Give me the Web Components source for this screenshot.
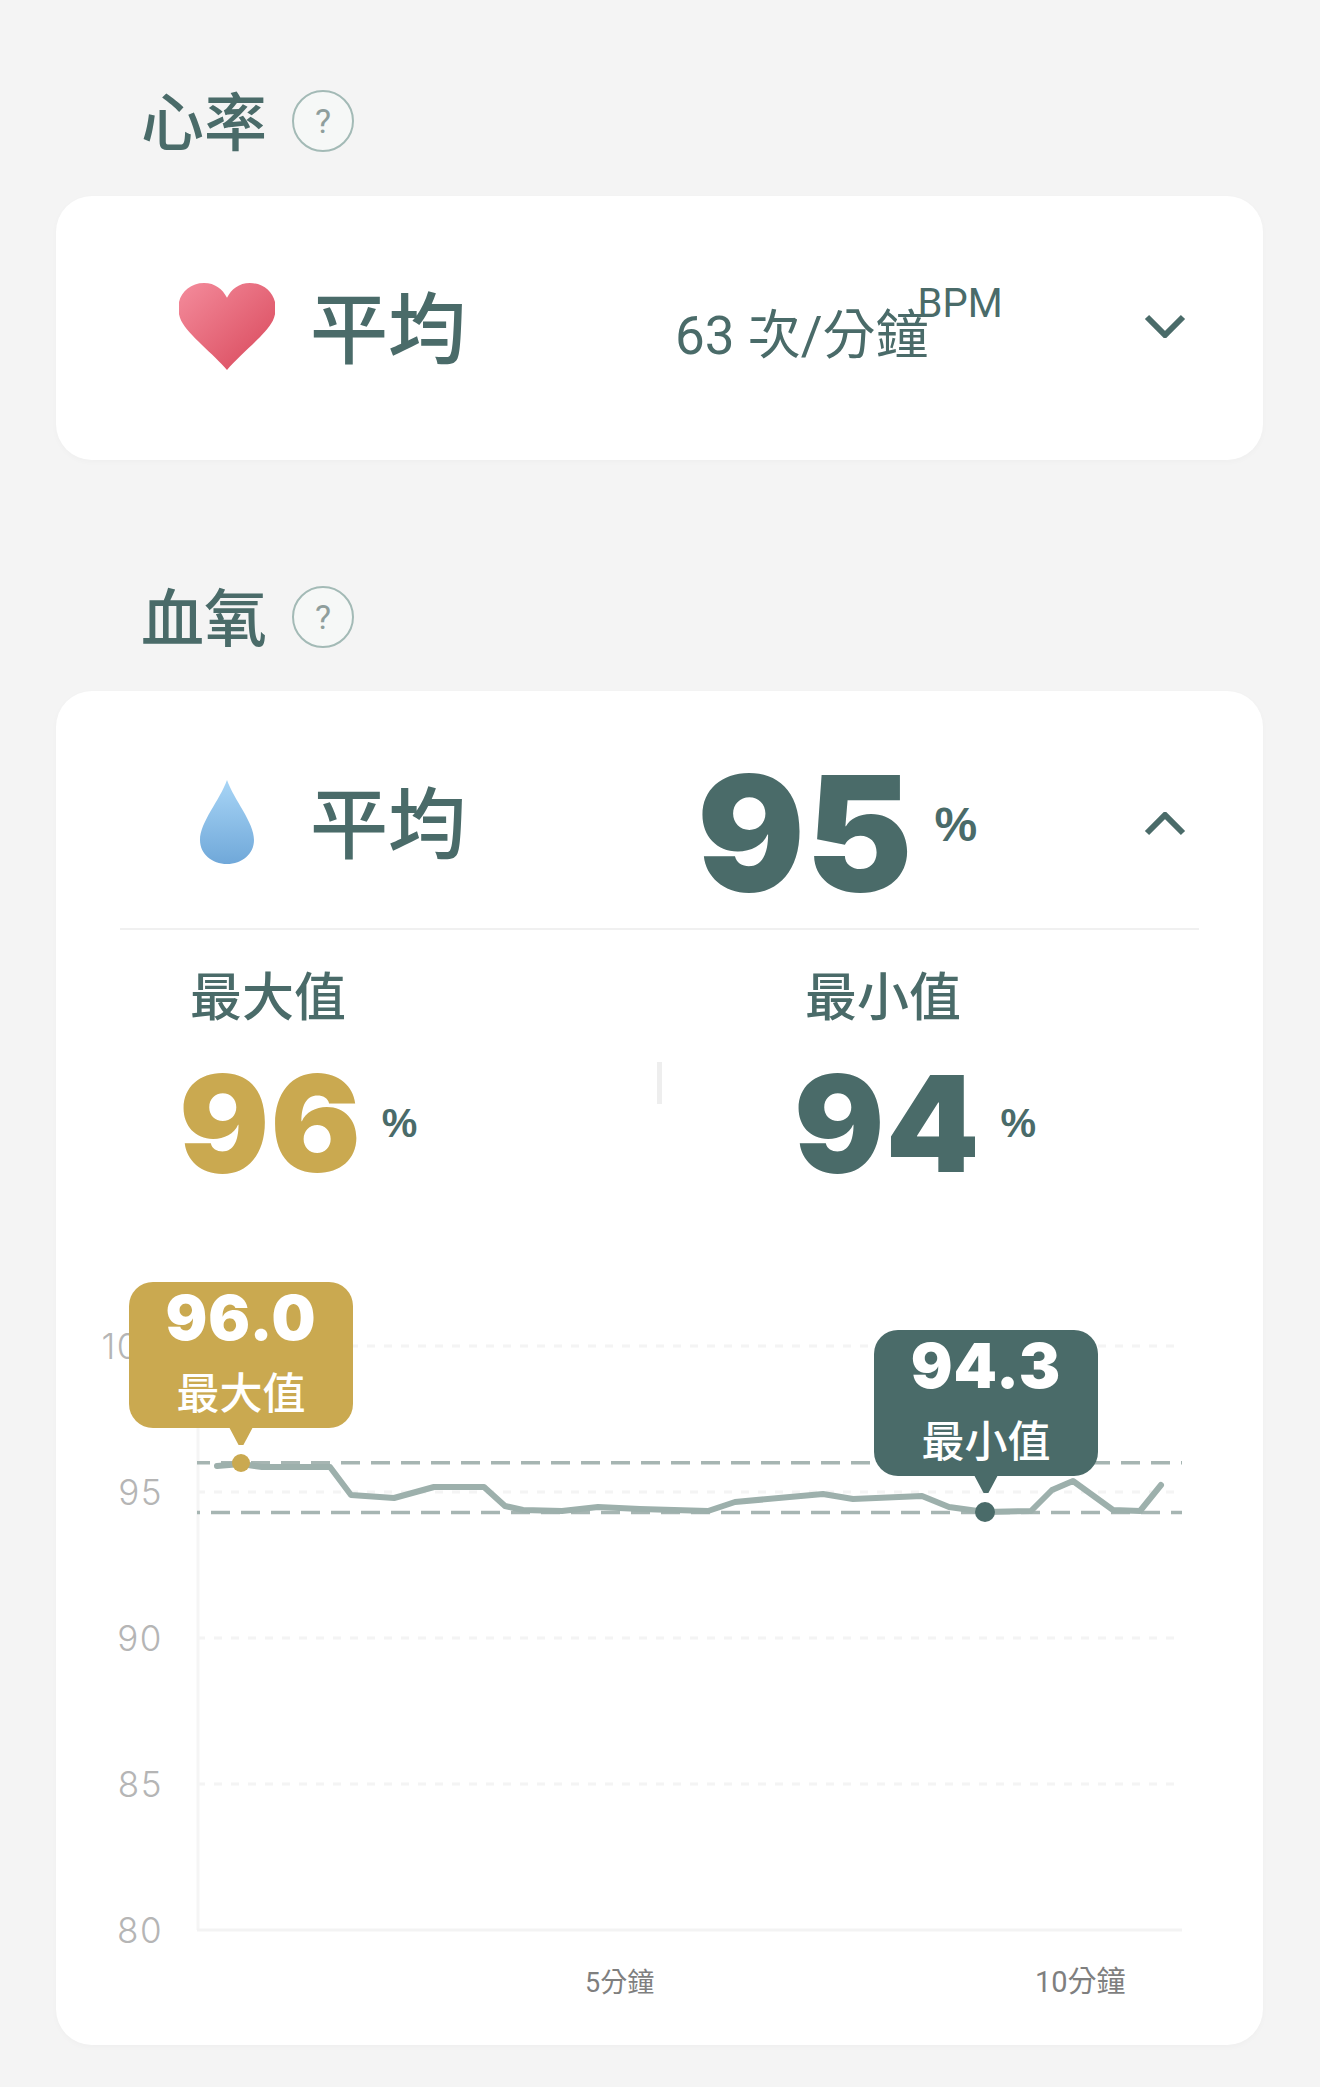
<!DOCTYPE html>
<html lang="zh-Hant">
<head>
<meta charset="utf-8">
<title>心率與血氧</title>
<style>
html,body{margin:0;padding:0;background:#f4f4f4}
body{width:1320px;height:2087px;overflow:hidden;color:#4a6b69;font-family:"Noto Sans CJK TC","Noto Sans",sans-serif}
</style>
</head>
<body>
<vital-page>
  <vital-title>心率</vital-title>
  <vital-card variant="collapsed">
    <vital-row>
      <svg slot="icon" width="96" height="87" viewBox="3 2 88 83" preserveAspectRatio="none"><defs><linearGradient id="h" x1="0" y1="0" x2="1" y2="1"><stop offset="0" stop-color="#f48c9c"/><stop offset="1" stop-color="#d8475a"/></linearGradient></defs><path fill="url(#h)" d="M47 85 C35 70 12 52 5 38 C-3 20 8 2 26 2 C36 2 43 8 47 16 C51 8 58 2 68 2 C86 2 97 20 89 38 C82 52 59 70 47 85Z"/></svg>
      <text-bpm slot="value"></text-bpm>
    </vital-row>
  </vital-card>
  <vital-title class="second">血氧</vital-title>
  <vital-card variant="open">
    <vital-row open>
      <svg slot="icon" width="54" height="84" viewBox="0 0 54 84"><defs><linearGradient id="d" x1="0" y1="0" x2="0" y2="1"><stop offset="0" stop-color="#a8d5f6"/><stop offset="1" stop-color="#70a8d9"/></linearGradient></defs><path fill="url(#d)" d="M27 0 C20 20 0 42 0 60 C0 74 12 84 27 84 C42 84 54 74 54 60 C54 42 34 20 27 0Z"/></svg>
      <big-value slot="value" size="160" unit="48">95</big-value>
    </vital-row>
    <vital-stats></vital-stats>
    <spo-chart></spo-chart>
  </vital-card>
</vital-page>
<script>
const def=(name,html,extra={})=>{
  const tpl=document.createElement('template');tpl.innerHTML=html;
  customElements.define(name,class extends HTMLElement{
    constructor(){super();this.attachShadow({mode:'open'}).appendChild(tpl.content.cloneNode(true));}
    connectedCallback(){extra.init&&extra.init.call(this)}
  });
};
const INK='#4a6b69',GOLD='#caa950';
def('vital-page',`<style>:host{display:block;padding:76px 57px 0 56px}
::slotted(vital-title.second){margin-top:112px;margin-bottom:29px}</style><slot></slot>`);
def('help-mark',`<style>:host{display:inline-flex;align-items:center;justify-content:center;width:58px;height:58px;margin-top:7px;border:2px solid #a3bab6;border-radius:50%;background:#f6f8f7;color:#8f9e9c;font:34px "Roboto",sans-serif;margin-left:25px}</style>?`);
def('vital-title',`<style>:host{display:flex;align-items:center;box-sizing:border-box;height:90px;padding-left:85px;padding-bottom:7px;margin-bottom:30px;font:500 63px/83px "Noto Sans CJK TC",sans-serif;color:${INK}}</style><slot></slot><help-mark></help-mark>`);
def('vital-card',`<style>:host{display:block;background:#fff;border-radius:36px;box-shadow:0 2px 6px rgba(0,0,0,.025);padding:0 64px}
:host([variant=collapsed]){height:264px}
:host([variant=open]){height:1354px;padding-top:24px;box-sizing:border-box}</style><slot></slot>`);
def('vital-row',`<style>:host{display:flex;align-items:center;height:260px;color:${INK}}
:host([open]){height:215px;border-bottom:2px solid #f0f0f0;box-sizing:border-box}
.ic{width:190px;display:flex;justify-content:center;box-sizing:border-box}
.ic ::slotted(svg){display:block;margin-left:24px}
.lab{width:365px;padding-bottom:5px;font:500 78px/1 "Noto Sans CJK TC",sans-serif}
.val{flex:1;min-width:0}
.chev{width:42px;height:24px;margin-right:13px;flex:none}
.up{display:none;margin-top:5px}
:host([open]) .up{display:block}:host([open]) .down{display:none}
:host([open]) .val{padding-left:22px;padding-top:22px}
</style><div class="ic"><slot name="icon"></slot></div><div class="lab">平均</div><div class="val"><slot name="value"></slot></div>
<svg class="chev down" viewBox="0 0 42 24"><path d="M3 3 L21 21 L39 3" fill="none" stroke="${INK}" stroke-width="6"/></svg>
<svg class="chev up" viewBox="0 0 42 24"><path d="M3 21 L21 3 L39 21" fill="none" stroke="${INK}" stroke-width="6"/></svg>`);
def('text-bpm',`<style>:host{display:flex;align-items:flex-start;font:400 53px/1 "Roboto","Noto Sans CJK TC",sans-serif;color:${INK};position:relative;top:10px}
.u{font-size:40px;margin-left:-11px;margin-top:-26px}
.t{white-space:nowrap}</style><span class="t">63 次/分鐘</span><span class="u">BPM</span>`);
def('big-value',`<style>:host{display:inline-flex;align-items:center;color:var(--c,${INK});font:900 var(--s,160px)/1 "Inter",sans-serif;letter-spacing:1px}
.u{font:700 var(--u,38px)/1 "Liberation Sans",sans-serif;margin-left:var(--g,21px);margin-bottom:var(--lift,16px);letter-spacing:0;color:${INK}}
</style><slot></slot><span class="u">%</span>`,{init(){
  this.style.setProperty('--s',(this.getAttribute('size')||160)+'px');
  this.style.setProperty('--u',(this.getAttribute('unit')||38)+'px');
  if(this.getAttribute('color'))this.style.setProperty('--c',this.getAttribute('color'));
}});
def('vital-stats',`<style>:host{display:grid;grid-template-columns:1fr 5px 1fr;height:310px;box-sizing:border-box;color:${INK}}
.c{display:flex;flex-direction:column;align-items:flex-start}
.c.l{padding-left:70px}.c.r{padding-left:143px}
.n{font:500 52px/1 "Noto Sans CJK TC",sans-serif;margin-top:38px;margin-bottom:36px}
.bar{background:#eeeeee;height:42px;margin-top:132px}
big-value{margin-left:-11px;--g:20px;--lift:0px}
</style>
<div class="c l"><div class="n">最大值</div><big-value size="134" unit="40" color="${GOLD}">96</big-value></div>
<div class="bar"></div>
<div class="c r"><div class="n">最小值</div><big-value size="134" unit="40">94</big-value></div>`);
def('chart-tip',`<style>:host{position:absolute;display:flex;flex-direction:column;align-items:center;box-sizing:border-box;width:224px;height:146px;padding-top:6px;border-radius:24px;background:var(--bg);color:#fff}
:host::after{content:"";position:absolute;left:100px;bottom:-17px;width:24px;height:18px;background:var(--bg);clip-path:polygon(0 0,100% 0,60% 100%,40% 100%)}
.v{font:900 62px/60px "Inter",sans-serif;letter-spacing:1px}
.n{font:500 43px/1 "Noto Sans CJK TC",sans-serif;margin-top:21px}
</style><div class="v"><slot></slot></div><div class="n"><slot name="n"></slot></div>`);
const y=v=>1930-(v-80)*29.2;
const pts="217,1466 241,1464 262,1467 330,1467 351,1495 394,1498 434,1487 484,1487 505,1506 523,1510 562,1511 598,1507 640,1509 708,1511 735,1502 823,1494 853,1499 922,1496 949,1507 985,1512 1031,1511 1052,1490 1073,1481 1113,1510 1140,1511 1161,1485";
const grid=[100,95,90,85].map(v=>`<line x1="197" x2="1182" y1="${y(v)}" y2="${y(v)}" stroke="#f4f4f4" stroke-width="3" stroke-dasharray="8 9"/>`).join('');
const ticks=[100,95,90,85,80].map(v=>`<text x="163" y="${y(v)+13}" text-anchor="end">${v}</text>`).join('');
def('spo-chart',`<style>:host{display:block;position:relative;width:1207px;height:804px;margin:0 -64px}
svg{display:block}
.t{font:300 35px "Inter",sans-serif;fill:#b5b5b5;letter-spacing:1.5px}
.x{font:400 27px "Roboto","Noto Sans CJK TC",sans-serif;fill:#7f7f7f}
.x2{font-size:29px}
chart-tip.a{left:73px;top:42px;--bg:${GOLD}}
chart-tip.b{left:818px;top:90px;--bg:${INK}}
</style>
<svg width="1207" height="804" viewBox="56 1240 1207 804">
<g class="t">${ticks}</g>
${grid}
<line x1="198" x2="198" y1="${y(100)}" y2="1930" stroke="#f5f5f5" stroke-width="3"/>
<line x1="197" x2="1182" y1="1930" y2="1930" stroke="#f3f3f3" stroke-width="3"/>
<line x1="197" x2="1182" y1="${y(96)}" y2="${y(96)}" stroke="#a6b5b2" stroke-width="3.5" stroke-dasharray="19 11" stroke-dashoffset="6"/>
<line x1="197" x2="1182" y1="${y(94.3)}" y2="${y(94.3)}" stroke="#a6b5b2" stroke-width="3.5" stroke-dasharray="19 11" stroke-dashoffset="16"/>
<polyline points="${pts}" fill="none" stroke="#9db0ac" stroke-width="6" stroke-linejoin="round" stroke-linecap="round"/>
<circle cx="241" cy="1463" r="9" fill="${GOLD}"/>
<circle cx="985" cy="1512" r="10" fill="${INK}"/>
<text class="x" x="585" y="1992">5分鐘</text>
<text class="x x2" x="1035" y="1992">10分鐘</text>
</svg>
<chart-tip class="a">96.0<span slot="n">最大值</span></chart-tip>
<chart-tip class="b">94.3<span slot="n">最小值</span></chart-tip>`);
</script>
</body>
</html>
